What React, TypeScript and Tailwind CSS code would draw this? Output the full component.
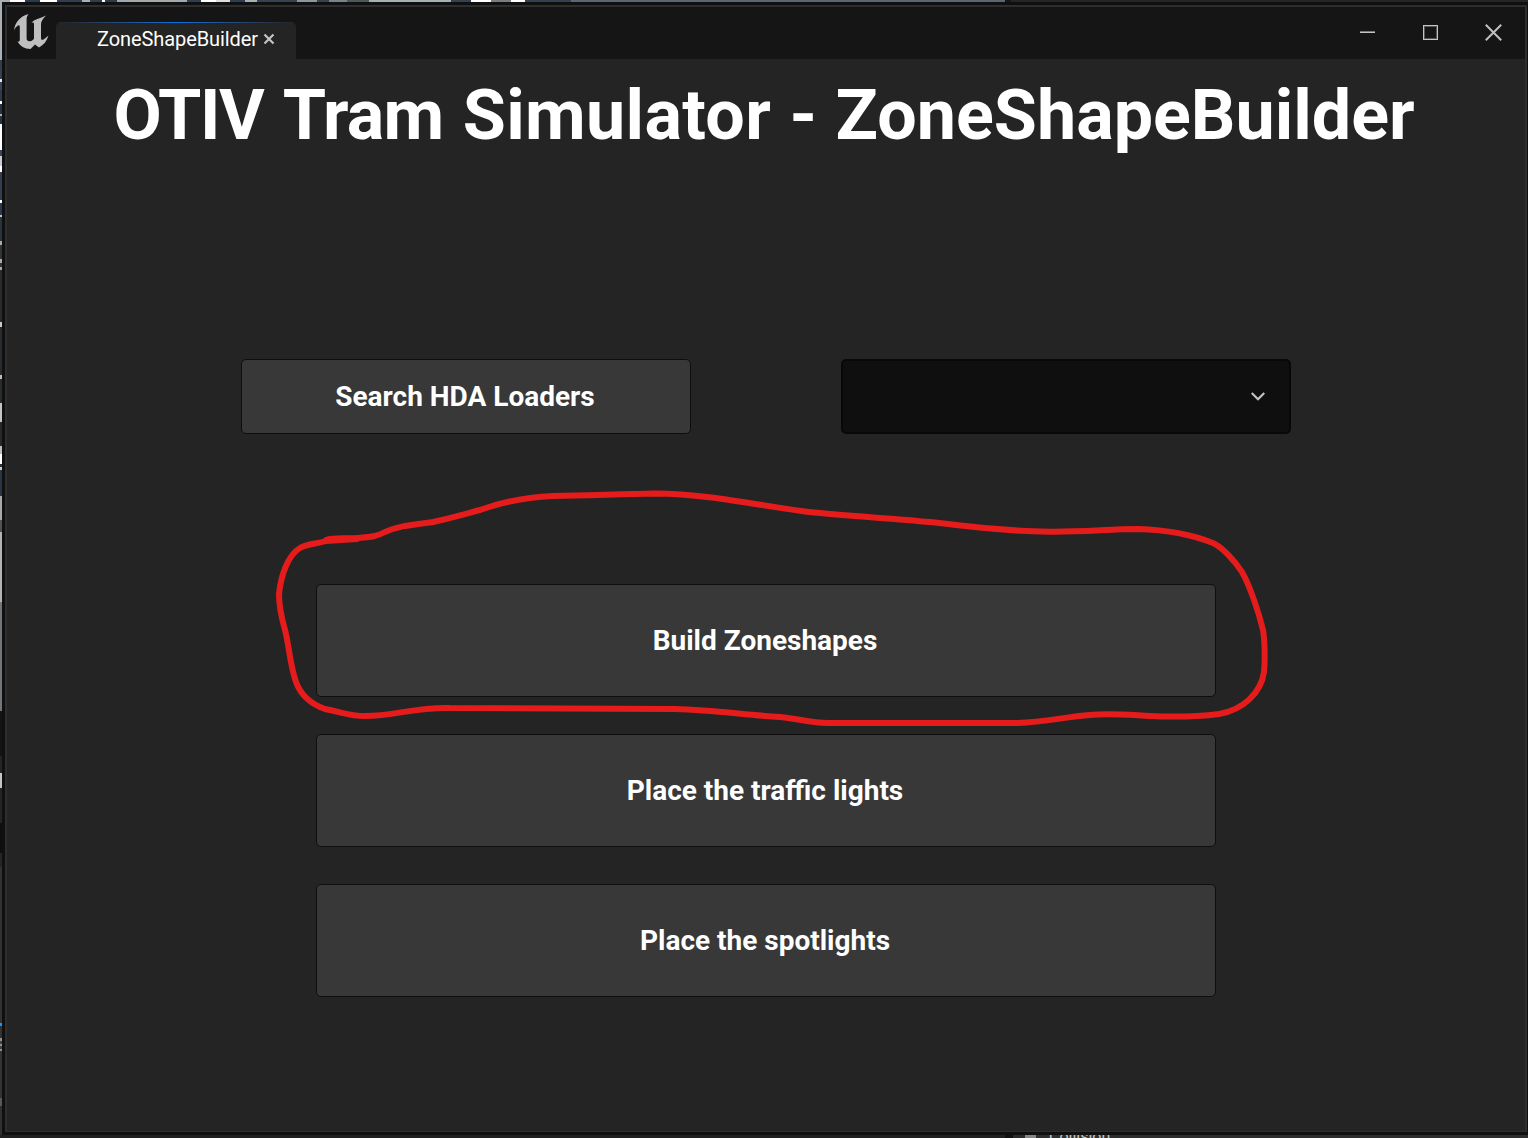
import React from 'react';

type Strip = { size: number; color: string };

const leftStrips: Strip[] = [
  { size: 10, color: '#2f3d4c' }, { size: 9, color: '#35414f' }, { size: 3, color: '#e8e8e8' },
  { size: 8, color: '#38475c' }, { size: 11, color: '#2c3a4b' }, { size: 3, color: '#ffffff' },
  { size: 10, color: '#2a3441' }, { size: 2, color: '#a9afb2' }, { size: 8, color: '#2a3441' },
  { size: 26, color: '#ffffff' }, { size: 6, color: '#3a475a' },
  { size: 10, color: '#c9ccd2' }, { size: 6, color: '#ffffff' }, { size: 28, color: '#343e50' },
  { size: 3, color: '#ffffff' }, { size: 12, color: '#2b3b4e' }, { size: 2, color: '#c0c3c6' },
  { size: 24, color: '#2b3439' }, { size: 4, color: '#a8aaac' }, { size: 14, color: '#303638' },
  { size: 4, color: '#aaaaaa' }, { size: 4, color: '#303638' }, { size: 3, color: '#aaaaaa' },
  { size: 52, color: '#272b2d' }, { size: 5, color: '#c8c8c8' }, { size: 48, color: '#262c2f' },
  { size: 4, color: '#bbbbbb' }, { size: 24, color: '#272c2f' }, { size: 19, color: '#c4c4c4' },
  { size: 24, color: '#25292b' }, { size: 8, color: '#bdbdbd' }, { size: 10, color: '#ffffff' },
  { size: 3, color: '#333333' }, { size: 3, color: '#cccccc' }, { size: 26, color: '#2a3742' },
  { size: 24, color: '#a8a8a8' }, { size: 12, color: '#505355' }, { size: 70, color: '#b1b4b4' },
];

const lowerStrips: Strip[] = [
  { size: 108, color: '#70767a' }, { size: 45, color: '#141414' }, { size: 17, color: '#252525' },
  { size: 15, color: '#c4c4c4' }, { size: 35, color: '#242424' }, { size: 30, color: '#0e0e0e' },
  { size: 14, color: '#262626' }, { size: 156, color: '#323232' }, { size: 3, color: '#0d9bff' },
  { size: 12, color: '#333333' }, { size: 3, color: '#909090' }, { size: 3, color: '#444444' },
  { size: 2, color: '#909090' }, { size: 3, color: '#444444' }, { size: 2, color: '#909090' },
  { size: 47, color: '#333333' }, { size: 8, color: '#585858' }, { size: 100, color: '#303030' },
];

const topStrips: Strip[] = [
  { size: 10, color: '#a9afb2' }, { size: 15, color: '#ffffff' }, { size: 15, color: '#2c3b4b' },
  { size: 17, color: '#ffffff' }, { size: 25, color: '#303e50' }, { size: 8, color: '#a9afb2' },
  { size: 12, color: '#333e48' }, { size: 3, color: '#ffffff' }, { size: 12, color: '#303b46' },
  { size: 70, color: '#a3a9ab' }, { size: 14, color: '#2f3d4c' }, { size: 15, color: '#ffffff' },
  { size: 14, color: '#dddddd' }, { size: 15, color: '#2f3d50' }, { size: 12, color: '#a9afb2' },
  { size: 40, color: '#34434f' }, { size: 20, color: '#90979a' }, { size: 12, color: '#34434f' },
  { size: 18, color: '#7c8388' }, { size: 22, color: '#4f575b' }, { size: 82, color: '#a9b0b3' },
  { size: 20, color: '#35414c' }, { size: 20, color: '#ffffff' }, { size: 20, color: '#777d80' },
  { size: 14, color: '#ffffff' }, { size: 46, color: '#33414f' }, { size: 434, color: '#5c6673' },
  { size: 6, color: '#151515' }, { size: 527, color: '#252525' },
];

function UnrealLogo() {
  return (
    <svg className="mt-[7px] ml-[7px] h-[36px] w-[35px] shrink-0" viewBox="0 0 35 36" fill="#bfbfbf">
      <path d="M0 16.500C.8 8.500 6.500 2 14.500 0C13 2 12.600 3.500 12.600 5.500V24.500C12.600 26.500 14 27.400 16 27.200C18 27 19.200 26 20 24.500V10C20 8.500 19 8 17.500 9C20 5 26 4.500 32 1.500C28.500 5 27 7.500 27 10.500V24C27 25.800 28.200 26.300 29.500 25.500C31.500 24.300 33 23 34.500 21.500C33 27 29.500 31 25 33.500L21 30.500L16.500 35C10.500 35 6 32 3.500 27.500C5.200 28 5.800 27.200 5.800 25.500V13.500C5.800 11.500 5.200 10.800 4 11.600C2.200 12.600 1 14.300 0 16.500Z" />
    </svg>
  );
}

function TitleBar() {
  return (
    <header className="flex h-[52px] shrink-0 bg-[#151515]">
      <UnrealLogo />
      <div className="mt-[15px] ml-[7px] flex w-[240px] flex-col overflow-hidden rounded-t-[5px] bg-[#242424]">
        <div className="h-px shrink-0 bg-linear-to-r from-[#242424] via-[#0870e0] to-[#242424]" />
        <div className="flex h-[31px] items-center pl-[41px]">
          <span className="w-[161px] whitespace-nowrap text-[20px] leading-none tracking-[-0.08px] text-white">ZoneShapeBuilder</span>
          <svg className="mt-px ml-[5px] size-[12px]" viewBox="0 0 12 12" stroke="#c4c4c4" strokeWidth="2.200">
            <path d="M1.500 1.500L10.500 10.500M10.500 1.500L1.500 10.500" />
          </svg>
        </div>
      </div>
      <div className="mt-[10px] mr-[23px] ml-auto flex h-[30px] items-center">
        <div className="flex h-[15px] w-[15px] items-center">
          <div className="h-[2px] w-full border-t border-[#777777] bg-[#c4c4c4]" />
        </div>
        <div className="mr-[47px] ml-[48px] size-[15px] border border-[#c4c4c4] shadow-[inset_0_0_0_1px_#555555]" />
        <svg className="size-[17px]" viewBox="0 0 17 17" stroke="#c0c0c0" strokeWidth="2">
          <path d="M.8.8L16.200 16.200M16.200.8L.8 16.200" />
        </svg>
      </div>
    </header>
  );
}

function ActionButton({ label }: { label: string }) {
  return (
    <button className="flex h-[113px] w-[900px] items-center justify-center rounded-[5px] border border-[#0e0e0e] bg-[#383838] pr-[2px] text-[28px] font-bold text-white">
      {label}
    </button>
  );
}

function Annotation() {
  return (
    <svg className="pointer-events-none absolute top-0 left-0 h-[1138px] w-[1528px]" viewBox="0 0 1528 1138" fill="none" stroke="#e61c1c" strokeWidth="6" strokeLinecap="round" strokeLinejoin="round">
      <path d="M326 540C334 537 346 539 357 538C370 537 376 537 385 532C398 526 410 525 433 522C455 517 465 514 480 510C505 501 530 497 553 496C590 495.500 620 494 655 493.500C710 494 755 505 805 511.500C845 516 890 518 930 522C965 525.500 990 531 1050 531.700C1085 532 1110 529 1138 529C1170 530 1193 535 1213 543C1222 547 1235 561 1242 572C1250 586 1259 613 1263 630C1265 642 1265 662 1264 672C1261 693 1243 710 1219 714C1195 717 1170 717 1150 716C1130 715 1110 713 1090 715C1065 717 1045 722 1018 723H828C810 723 800 719 780 717C745 715 715 710 675 709C610 708.500 540 709 450 708C415 707 395 716 365 716C350 716 345 713 325 709C308 703 300 693 296 682C290 665 289 645 285 630C281 616 279 603 279 594C281 575 288 555 300 548C307 544 316 544 326 541L357 539" />
    </svg>
  );
}

export default function App() {
  return (
    <div className="relative flex h-[1138px] w-[1528px] flex-col overflow-hidden bg-[#252525] font-[Roboto,sans-serif]">
      <div className="flex h-[2px] shrink-0">
        {topStrips.map((s, i) => <div key={i} className="h-full shrink-0" style={{ width: s.size, background: s.color }} />)}
      </div>
      <div className="flex h-[1133px] shrink-0">
        <div className="flex w-[2px] shrink-0 flex-col overflow-hidden">
          <div className="h-[58px] shrink-0 bg-[#a9afb2]" />
          <div className="flex h-[543px] shrink-0 flex-col overflow-hidden bg-[#747a7e]">
            {leftStrips.map((s, i) => <div key={i} className="shrink-0" style={{ height: s.size, background: s.color }} />)}
          </div>
          {lowerStrips.map((s, i) => <div key={i} className="shrink-0" style={{ height: s.size, background: s.color }} />)}
        </div>
        <div className="flex w-[1526px] flex-col bg-[#101010] pt-[3px] pr-px pb-[3px] pl-[3px]">
          <div className="flex flex-1 flex-col border-2 border-b-1 border-[#2e2e2e] bg-[#242424]">
            <TitleBar />
            <main className="flex flex-1 flex-col items-center">
              <h1 className="mt-[14px] h-[84px] pr-[4px] whitespace-nowrap text-[70px] leading-[84px] font-bold text-white">
                <span className="tracking-[-1.4px] [word-spacing:2px]">OTIV</span>
                <span className="[word-spacing:2px]">{' '}<span className="tracking-[-0.75px]">Tram</span>{' '}</span>
                <span className="tracking-[0.33px]">Simulator</span>
                <span className="[word-spacing:1px]">{' - ZoneShapeBuilder'}</span>
              </h1>
              <div className="mt-[202px] flex gap-[150px]">
                <button className="flex h-[75px] w-[450px] items-center justify-center rounded-[5px] border border-[#0e0e0e] bg-[#383838] pr-[2px] text-[28px] font-bold text-white">Search HDA Loaders</button>
                <div className="flex h-[75px] w-[450px] items-center justify-end rounded-[5px] border-2 border-[#080808] bg-[#0f0f0f] pr-[24px]">
                  <svg className="h-[9px] w-[14px]" viewBox="0 0 14 9" fill="none" stroke="#c4c4c4" strokeWidth="2.200">
                    <path d="M.7 1L7 7.300L13.300 1" />
                  </svg>
                </div>
              </div>
              <div className="mt-[150px] flex flex-col gap-[37px]">
                <ActionButton label="Build Zoneshapes" />
                <ActionButton label="Place the traffic lights" />
                <ActionButton label="Place the spotlights" />
              </div>
            </main>
          </div>
        </div>
      </div>
      <div className="flex h-[3px] shrink-0 overflow-hidden bg-[#202020] pl-[1005px]">
        <div className="h-full w-[8px] bg-[#111111]" />
        <div className="h-full w-[12px] bg-[#2b2b2b]" />
        <div className="h-full w-[11px] bg-[#858585]" />
        <div className="flex flex-1 bg-[#2e2e2e] pl-[13px] text-[16px] leading-[3px] text-[#c4c4c4]">
          <span className="h-[3px]">Collision</span>
        </div>
      </div>
      <Annotation />
    </div>
  );
}
